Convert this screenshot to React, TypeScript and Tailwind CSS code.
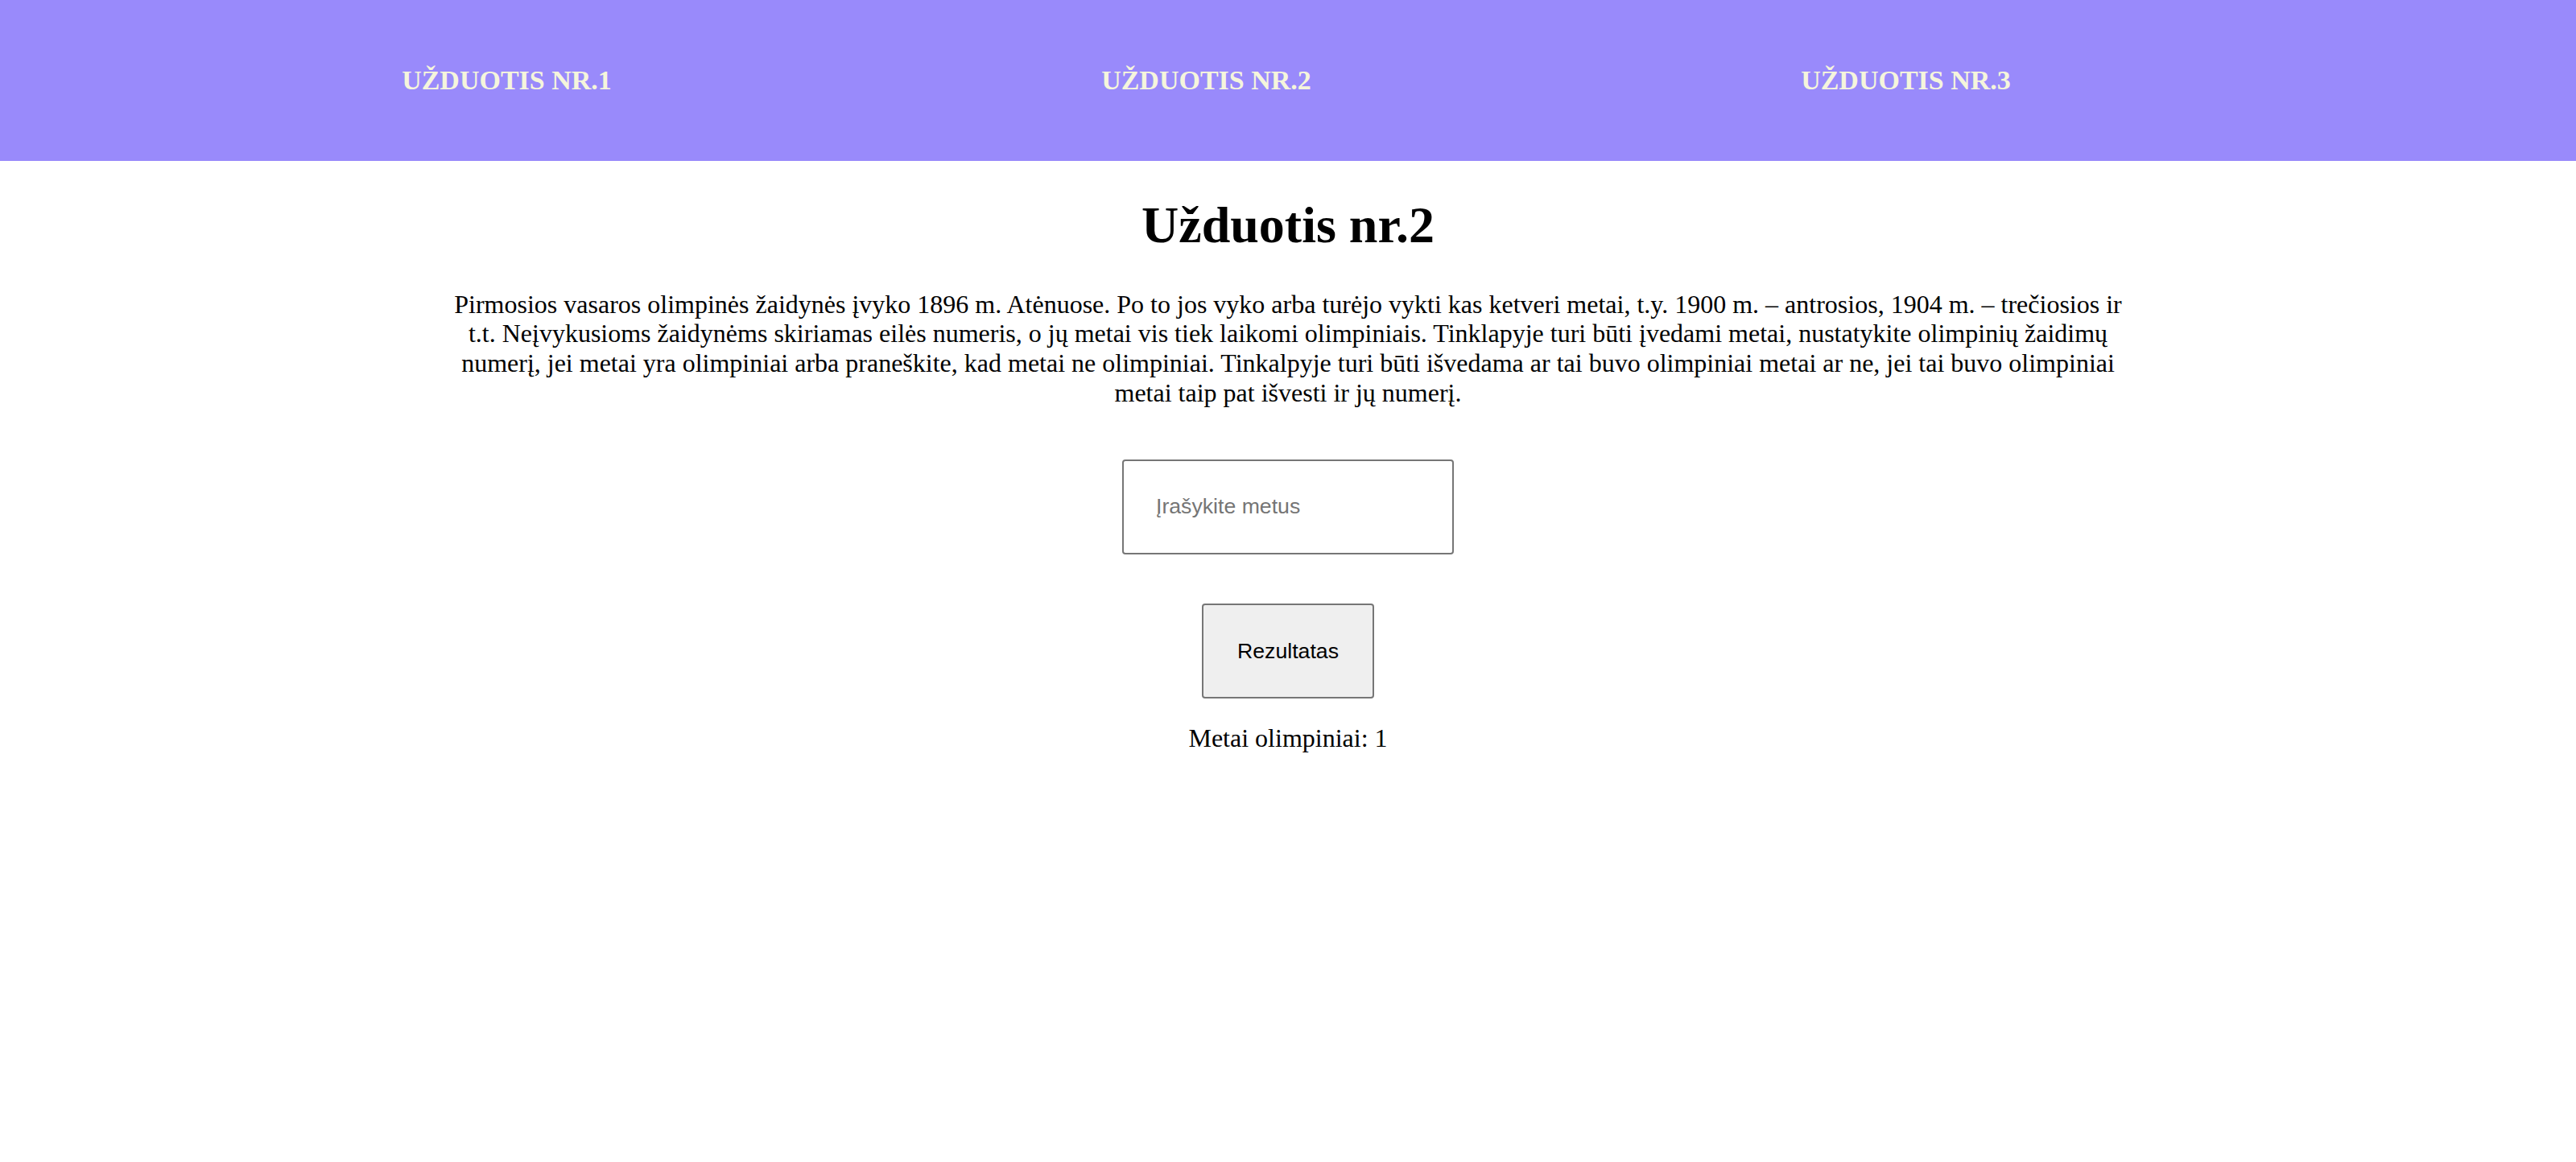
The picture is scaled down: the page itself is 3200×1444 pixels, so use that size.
import React, { useState } from 'react';

const navItems = ['UŽDUOTIS NR.1', 'UŽDUOTIS NR.2', 'UŽDUOTIS NR.3'];

const App: React.FC = () => {
  const [year, setYear] = useState('');
  const [result, setResult] = useState('Metai olimpiniai: 1');

  // olimpiniai metai kas 4 metus nuo 1896
  const check = () => {
    const y = parseInt(year, 10);
    if (isNaN(y) || y < 1896 || (y - 1896) % 4 !== 0) {
      setResult('Metai ne olimpiniai');
      return;
    }
    setResult(`Metai olimpiniai: ${(y - 1896) / 4 + 1}`);
  };

  return (
    <div className="min-h-screen bg-white font-['Liberation_Serif','Times_New_Roman',serif] text-black">
      <nav className="h-[200px] bg-[#998afb] flex items-center pl-[195px]">
        {navItems.map((item) => (
          <a
            key={item}
            href="#"
            className="w-[869px] text-center text-[34px] font-bold text-[#f5f5dc] leading-none"
          >
            {item}
          </a>
        ))}
      </nav>

      <main className="flex flex-col items-center">
        <h1 className="mt-[43px] text-[64px] font-bold leading-[1.15]">Užduotis nr.2</h1>
        <p className="mt-[43px] w-[2080px] text-center text-[32px] leading-[1.15]">
          Pirmosios vasaros olimpinės žaidynės įvyko 1896 m. Atėnuose. Po to jos vyko arba turėjo vykti kas ketveri metai, t.y. 1900 m. – antrosios, 1904 m. – trečiosios ir t.t. Neįvykusioms žaidynėms skiriamas eilės numeris, o jų metai vis tiek laikomi olimpiniais. Tinklapyje turi būti įvedami metai, nustatykite olimpinių žaidimų numerį, jei metai yra olimpiniai arba praneškite, kad metai ne olimpiniai. Tinkalpyje turi būti išvedama ar tai buvo olimpiniai metai ar ne, jei tai buvo olimpiniai metai taip pat išvesti ir jų numerį.
        </p>

        <input
          type="text"
          value={year}
          onChange={(e) => setYear(e.target.value)}
          placeholder="Įrašykite metus"
          className="mt-[64px] w-[412px] h-[118px] px-[40px] border-2 border-[#767676] rounded-[4px] bg-white font-['Liberation_Sans',Arial,sans-serif] text-[26.67px] text-black placeholder:text-[#757575] outline-none"
        />

        <button
          onClick={check}
          className="mt-[61px] w-[214px] h-[118px] border-2 border-[#767676] rounded-[4px] bg-[#efefef] font-['Liberation_Sans',Arial,sans-serif] text-[26.67px] text-black"
        >
          Rezultatas
        </button>

        <p className="mt-[31px] text-[32px] leading-[1.15]">{result}</p>
      </main>
    </div>
  );
};

export default App;
